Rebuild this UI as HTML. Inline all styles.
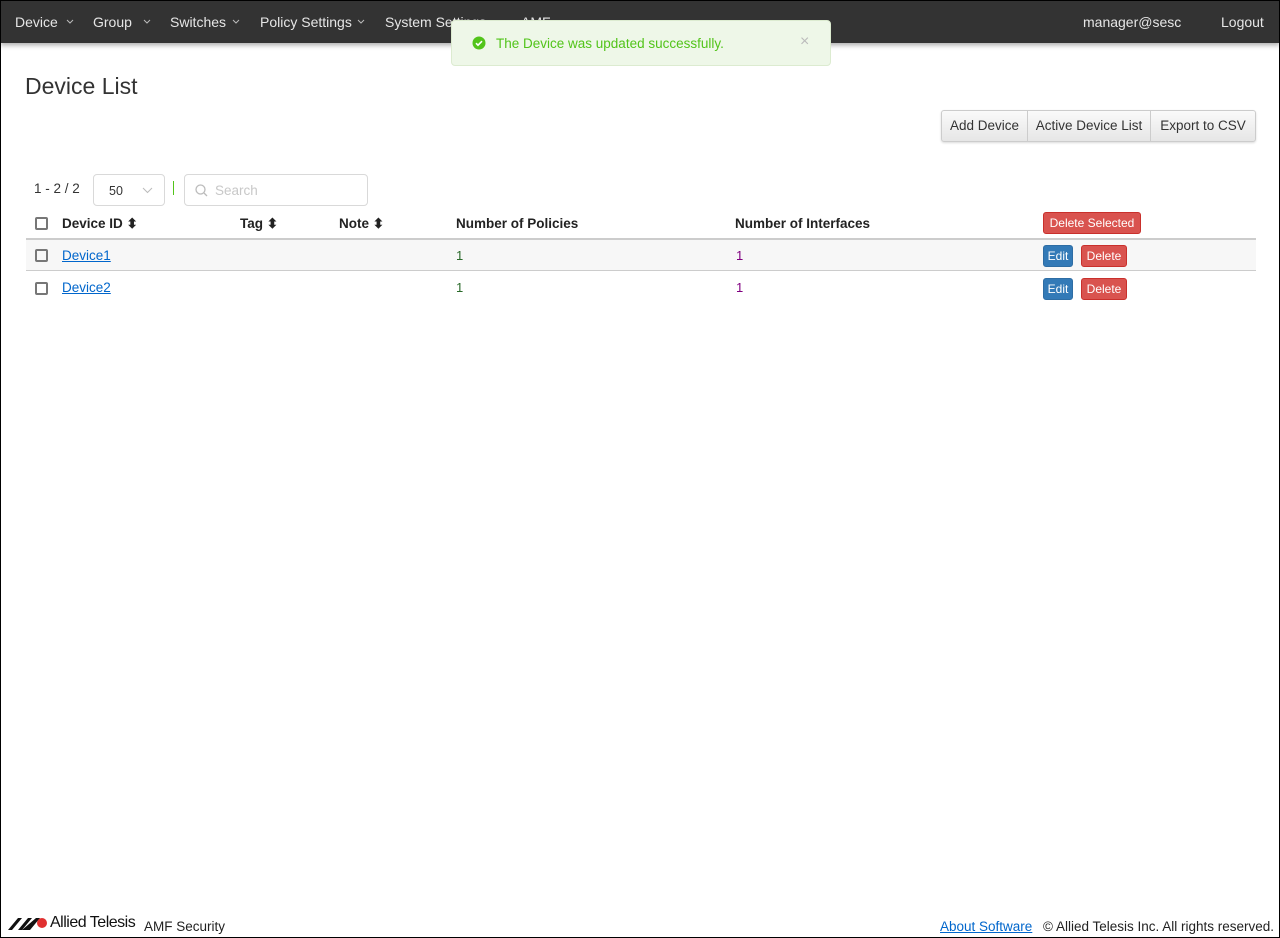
<!DOCTYPE html>
<html><head><meta charset="utf-8"><style>
*{box-sizing:border-box;margin:0;padding:0}
body{width:1280px;height:938px;position:relative;overflow:hidden;background:#fff;font-family:"Liberation Sans",sans-serif;font-size:13px;color:#333}
.frame{position:absolute;left:0;top:0;width:1280px;height:938px;border:1px solid #000;pointer-events:none;z-index:10}
.nav{position:absolute;left:0;top:0;width:1280px;height:43px;background:#333;box-shadow:0 2px 5px rgba(0,0,0,.35)}
.nav span{position:absolute;top:14px;color:#e6e6e6;font-size:14px}
.nav svg{position:absolute;top:19px}
.wrap{position:absolute;left:1px;top:0;width:1279px;height:938px}
.toast{position:absolute;left:450px;top:20px;width:380px;height:46px;background:#eef7e8;border:1px solid #dcebd0;border-radius:4px;color:#52c41a;font-size:14px}
.abs{position:absolute}
h1{position:absolute;left:24px;top:73px;font-size:23px;font-weight:normal;color:#333}
.bg{position:absolute;top:110px;left:940px;width:315px;height:32px;display:flex;border:1px solid #ccc;border-radius:3px;background:linear-gradient(#fafafa,#e6e6e6);box-shadow:0 1px 2px rgba(0,0,0,.15)}
.bg div{line-height:30px;font-size:13.5px;color:#333;border-right:1px solid #ccc;text-align:center;white-space:nowrap}
.bg div:last-child{border-right:0}
.cb{position:absolute;width:13px;height:13px;border:2px solid #777;border-radius:2px;left:34px}
.th{position:absolute;top:216px;font-weight:bold;font-size:13.5px;color:#222}
.btn{position:absolute;color:#fff;font-size:12px;border-radius:3px;text-align:center;line-height:20px;height:22px}
.red{background:#d9534f;border:1px solid #c9302c}
.blue{background:#337ab7;border:1px solid #2e6da4}
a{color:#0066cc;text-decoration:underline}
</style></head><body>
<div class="frame"></div>
<div class="nav">
<span style="left:15px">Device</span><svg style="left:66px" width="8" height="6"><path d="M1 1l3 3 3-3" stroke="#bbb" fill="none"/></svg>
<span style="left:93px">Group</span><svg style="left:143px" width="8" height="6"><path d="M1 1l3 3 3-3" stroke="#bbb" fill="none"/></svg>
<span style="left:170px">Switches</span><svg style="left:232px" width="8" height="6"><path d="M1 1l3 3 3-3" stroke="#bbb" fill="none"/></svg>
<span style="left:260px">Policy Settings</span><svg style="left:357px" width="8" height="6"><path d="M1 1l3 3 3-3" stroke="#bbb" fill="none"/></svg>
<span style="left:385px">System Settings</span>
<span style="left:521px">AMF</span>
<span style="left:1083px">manager@sesc</span>
<span style="left:1221px">Logout</span>
</div>
<div class="wrap">
<div class="toast">
<svg class="abs" style="left:20px;top:15px" width="14" height="14" viewBox="0 0 14 14"><circle cx="7" cy="7" r="6.5" fill="#52c41a"/><path d="M4 7.2l2 2 4-4" stroke="#fff" stroke-width="1.6" fill="none"/></svg>
<span class="abs" style="left:44px;top:15px;font-size:13.5px">The Device was updated successfully.</span>
<span class="abs" style="left:348px;top:12px;color:#bbb;font-size:16px">&#215;</span>
</div>
<h1>Device List</h1>
<div class="bg"><div style="width:86px">Add Device</div><div style="width:123px">Active Device List</div><div style="width:104px">Export to CSV</div></div>
<span class="abs" style="left:33px;top:181px;font-size:13.5px">1 - 2 / 2</span>
<div class="abs" style="left:92px;top:174px;width:72px;height:32px;border:1px solid #d9d9d9;border-radius:4px"><span class="abs" style="left:15px;top:9px;font-size:12.5px">50</span><svg class="abs" style="left:48px;top:11px" width="11" height="8"><path d="M1 2l4.5 4.5L10 2" stroke="#bbb" fill="none"/></svg></div>
<div class="abs" style="left:172px;top:181px;width:1px;height:14px;background:#52c41a"></div>
<div class="abs" style="left:183px;top:174px;width:184px;height:32px;border:1px solid #d9d9d9;border-radius:4px"><svg class="abs" style="left:10px;top:9px" width="13" height="13"><circle cx="5.5" cy="5.5" r="4.5" stroke="#bbb" fill="none" stroke-width="1.3"/><path d="M9 9l3 3" stroke="#bbb" stroke-width="1.3"/></svg><span class="abs" style="left:30px;top:8px;color:#c8c8c8;font-size:13.5px">Search</span></div>
<div class="cb" style="top:217px"></div>
<span class="th" style="left:61px">Device ID &#x2B0D;</span>
<span class="th" style="left:239px">Tag &#x2B0D;</span>
<span class="th" style="left:338px">Note &#x2B0D;</span>
<span class="th" style="left:455px">Number of Policies</span>
<span class="th" style="left:734px">Number of Interfaces</span>
<div class="btn red" style="left:1042px;top:212px;width:98px">Delete Selected</div>
<div class="abs" style="left:25px;top:238px;width:1230px;height:2px;background:#ccc"></div>
<div class="abs" style="left:25px;top:240px;width:1230px;height:31px;background:#f7f7f7;border-bottom:1px solid #ccc"></div>
<div class="cb" style="top:249px"></div>
<a class="abs" style="left:61px;top:248px;font-size:13.5px">Device1</a>
<span class="abs" style="left:455px;top:248px;color:#2a6a2a">1</span>
<span class="abs" style="left:735px;top:248px;color:#800080">1</span>
<div class="btn blue" style="left:1042px;top:245px;width:30px">Edit</div>
<div class="btn red" style="left:1080px;top:245px;width:46px">Delete</div>
<div class="cb" style="top:282px"></div>
<a class="abs" style="left:61px;top:280px;font-size:13.5px">Device2</a>
<span class="abs" style="left:455px;top:280px;color:#2a6a2a">1</span>
<span class="abs" style="left:735px;top:280px;color:#800080">1</span>
<div class="btn blue" style="left:1042px;top:278px;width:30px">Edit</div>
<div class="btn red" style="left:1080px;top:278px;width:46px">Delete</div>
<svg class="abs" style="left:7px;top:917px" width="40" height="13" viewBox="0 0 40 13"><path d="M0 13L10 1h4L4 13z M10 13L20 1h4L14 13z M14 13h8l10-12h-4z" fill="#111"/><circle cx="34" cy="6" r="5" fill="#e03030"/></svg>
<span class="abs" style="left:49px;top:914px;font-size:16px;color:#111;letter-spacing:-0.5px">Allied Telesis</span>
<span class="abs" style="left:143px;top:919px;font-size:13.5px;color:#222">AMF Security</span>
<a class="abs" style="left:939px;top:919px;font-size:13.5px">About Software</a>
<span class="abs" style="left:1042px;top:919px;font-size:13.5px;color:#222">© Allied Telesis Inc. All rights reserved.</span>
</div>
</body></html>
